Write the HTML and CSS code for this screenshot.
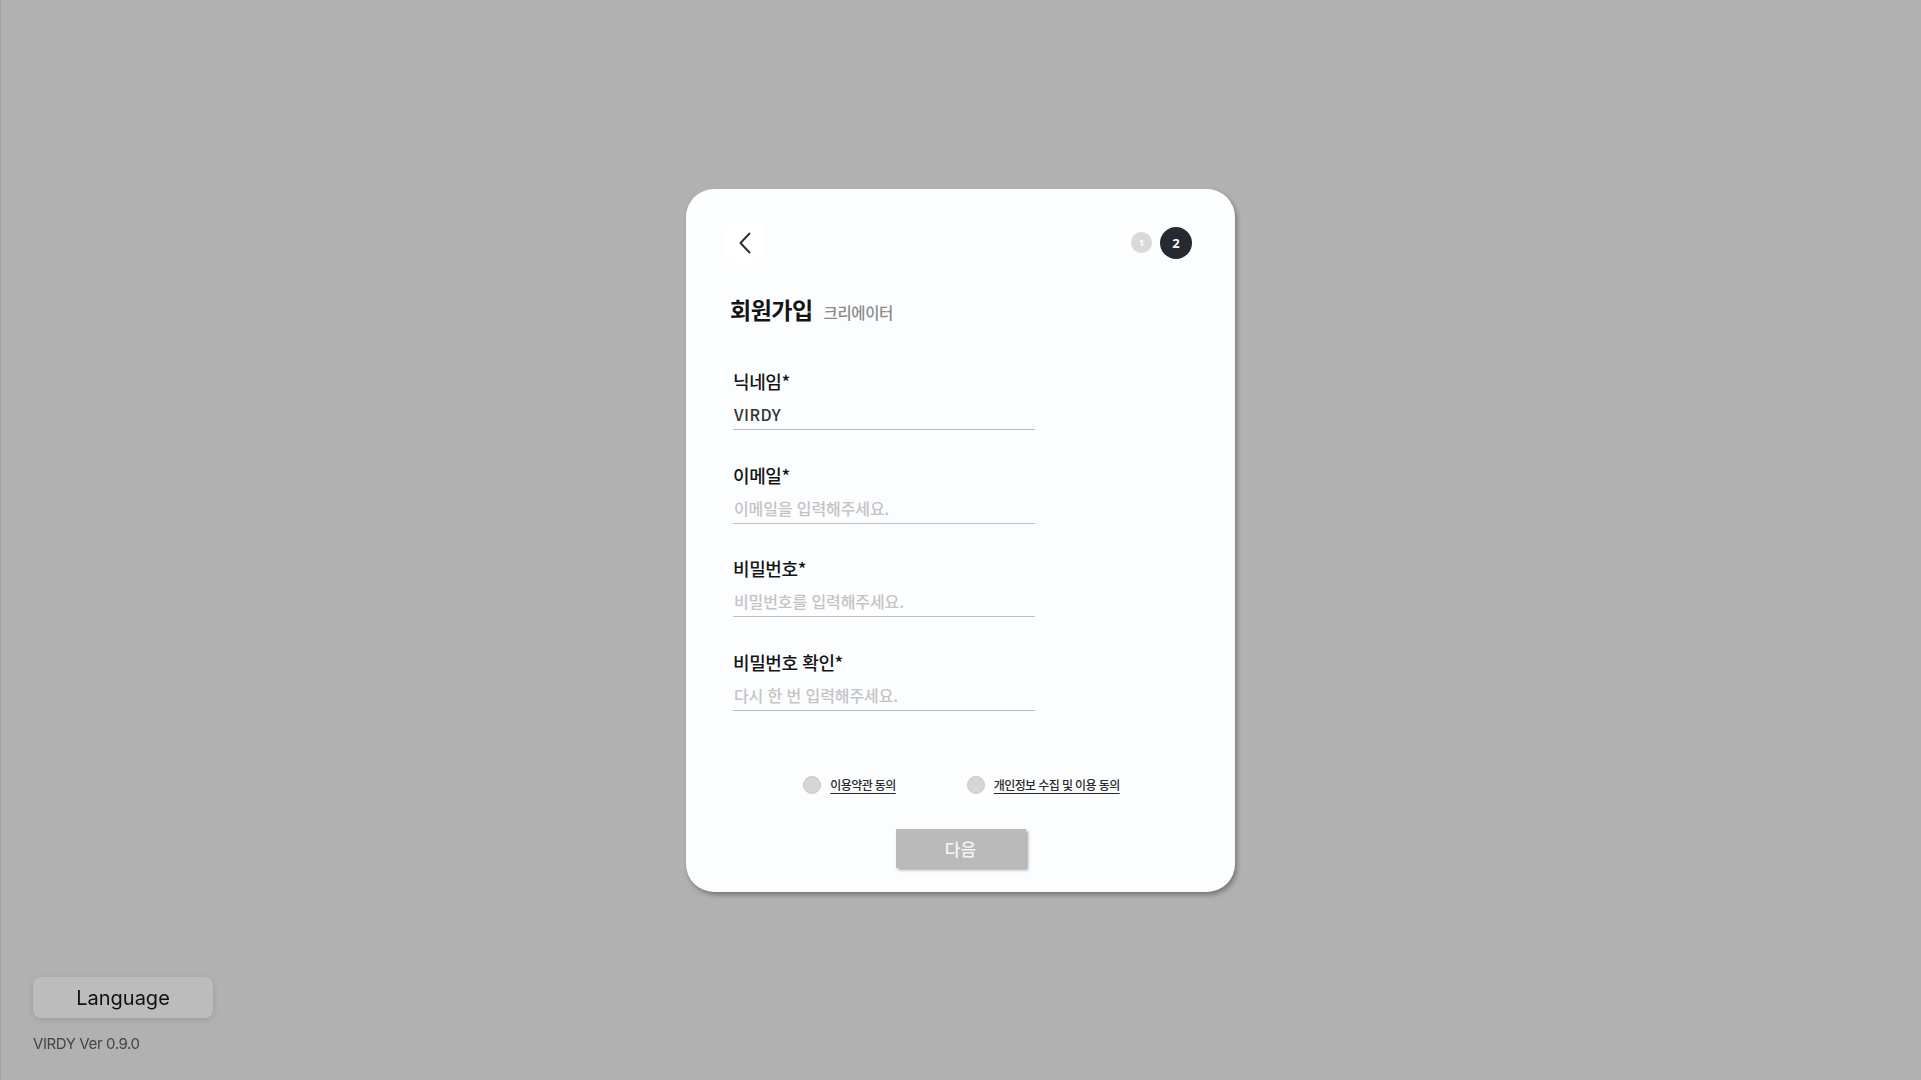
FILE: index.html
```html
<!DOCTYPE html>
<html lang="ko">
<head>
<meta charset="UTF-8">
<meta name="viewport" content="width=device-width,initial-scale=1.0">
<title>VIRDY 회원가입</title>
<link rel="stylesheet" href="styles.css">
</head>
<body>

<!-- ───────── SIGN-UP CARD ───────── -->
<main class="card">
  <div class="card-head">
    <button class="back" aria-label="뒤로">
      <svg width="12" height="22" viewBox="0 0 12 22"><polyline points="10.5,1.5 1.5,11 10.5,20.5" fill="none" stroke="#2b2b2b" stroke-width="1.9" stroke-linecap="round" stroke-linejoin="round"/></svg>
    </button>
    <div class="steps">
      <span class="step">1</span>
      <span class="step on">2</span>
    </div>
  </div>

  <h1 class="title">회원가입 <small>크리에이터</small></h1>

  <form class="fields">
    <label class="field">
      <span class="label">닉네임*</span>
      <input type="text" value="VIRDY">
    </label>
    <label class="field">
      <span class="label">이메일*</span>
      <input type="email" placeholder="이메일을 입력해주세요.">
    </label>
    <label class="field">
      <span class="label">비밀번호*</span>
      <input type="password" placeholder="비밀번호를 입력해주세요.">
    </label>
    <label class="field">
      <span class="label">비밀번호 확인*</span>
      <input type="password" placeholder="다시 한 번 입력해주세요.">
    </label>
  </form>

  <div class="agree">
    <label class="check"><span class="dot"></span><u>이용약관 동의</u></label>
    <label class="check"><span class="dot"></span><u>개인정보 수집 및 이용 동의</u></label>
  </div>

  <button class="next">다음</button>
</main>

<!-- ───────── FOOTER ───────── -->
<footer class="corner">
  <button class="lang">Language</button>
  <p class="ver">VIRDY Ver 0.9.0</p>
</footer>

</body>
</html>
```

FILE: styles.css
```css
:root{
  --bg:#b1b1b1; --card:#fcfdff; --ink:#141414; --muted:#8a8a8a;
  --line:#bdbdbd; --ph:#c4c4c4; --dark:#252931;
}
*{box-sizing:border-box;margin:0;padding:0}
html,body{height:100%}
body{
  background:var(--bg);
  font-family:"Noto Sans CJK KR","Noto Sans",sans-serif;
  color:var(--ink);
  display:flex;align-items:center;justify-content:center;
  box-shadow:inset 1px 0 #a2a2a2;
  overflow:hidden;
}
button{font-family:inherit;border:none;cursor:pointer}

/* ─ card ─ */
.card{
  width:549px;
  background:var(--card);
  border-radius:28px;
  box-shadow:2px 3px 5px rgba(0,0,0,.32);
  padding:34px 43px 24px 39px;
  display:flex;flex-direction:column;
}
.card-head{display:flex;align-items:center;justify-content:space-between;height:40px}
.back{width:40px;height:40px;border-radius:10px;background:#fff;display:flex;align-items:center;justify-content:center}
.steps{display:flex;align-items:center;gap:8px}
.step{width:21px;height:21px;border-radius:50%;background:#d9d9d9;color:#fff;font:700 9px/21px "Noto Sans",sans-serif;text-align:center}
.step.on{width:32px;height:32px;background:var(--dark);font-size:13px;line-height:32px}

.title{margin:31.5px 0 0 5px;font-size:23px;font-weight:700;line-height:30px;letter-spacing:-.5px}
.title small{margin-left:5px;font-size:15.5px;font-weight:500;color:var(--muted);letter-spacing:-.4px}

/* ─ form ─ */
.fields{margin:43px 0 0 8px;width:302px;display:flex;flex-direction:column;gap:33.5px}
.field{display:flex;flex-direction:column;gap:7px}
.label{font-size:18px;font-weight:500;line-height:22px;letter-spacing:-.4px}
.field input{
  height:31px;border:none;border-bottom:1px solid var(--line);background:transparent;
  font-family:"Noto Sans CJK KR","Noto Sans",sans-serif;font-size:16px;font-weight:500;color:#333;
  padding:0 1px;outline:none;letter-spacing:.5px;
}
.field input::placeholder{color:var(--ph);font-weight:500;letter-spacing:-.1px}

/* ─ agreements ─ */
.agree{margin:65px 0 0 6px;display:flex;justify-content:center;gap:71px;height:18px;align-items:center}
.check{display:flex;align-items:center;gap:9px;font-size:12px;font-weight:500;color:#2a2a2a;letter-spacing:-.6px;cursor:pointer}
.check u{text-underline-offset:3px;text-decoration-thickness:1px}
.dot{width:18px;height:18px;border-radius:50%;background:#d6d6d6;border:1px solid #c9c9c9}

.next{
  margin:35px auto 0;width:130px;height:39px;background:#bababa;color:#f4f4f4;
  font-size:17px;font-weight:500;box-shadow:2px 2px 3px rgba(0,0,0,.35);
  position:relative;left:2px;
}

/* ─ bottom-left corner ─ */
.corner{position:fixed;left:33px;bottom:26px;display:flex;flex-direction:column;gap:16px}
.lang{
  width:180px;height:41px;border-radius:8px;background:#bcbcbc;color:#111;
  font-family:Inter,"Noto Sans",sans-serif;font-size:20px;
  box-shadow:0 2px 6px rgba(0,0,0,.12);
}
.ver{font-family:Inter,"Noto Sans",sans-serif;font-size:15px;line-height:20px;letter-spacing:-.4px;color:#444}
```
